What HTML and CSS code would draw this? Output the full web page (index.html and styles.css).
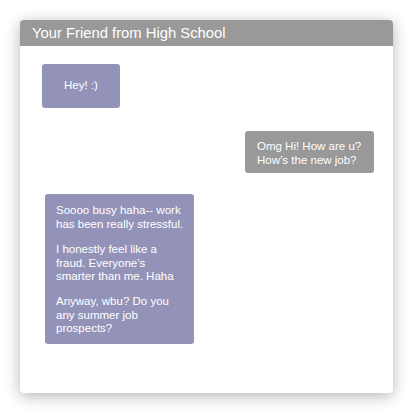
FILE: index.html
```html
<!DOCTYPE html>
<html>
<head>
<meta charset="utf-8">
<link rel="stylesheet" href="styles.css">
</head>
<body>
<div class="card">
  <div class="header">Your Friend from High School</div>
  <div class="thread">
    <div class="bubble them hey">Hey! :)</div>
    <div class="bubble me">Omg Hi! How are u? How’s the new job?</div>
    <div class="bubble them long">
      <p>Soooo busy haha-- work has been really stressful.</p>
      <p>I honestly feel like a fraud. Everyone’s smarter than me. Haha</p>
      <p>Anyway, wbu? Do you any summer job prospects?</p>
    </div>
  </div>
</div>
</body>
</html>
```
FILE: styles.css
```css
html, body {
  margin: 0;
  padding: 0;
  background: #fff;
}
body {
  padding: 20px;
  font-family: "Liberation Sans", Arial, sans-serif;
}
.card {
  width: 373px;
  height: 373px;
  background: #fff;
  border-radius: 4px;
  box-shadow: 0 3px 15px rgba(0, 0, 0, 0.3);
  overflow: hidden;
}
.header {
  height: 26px;
  background: #999999;
  color: #fff;
  font-size: 14.8px;
  line-height: 27px;
  padding-left: 12px;
}
.thread {
  display: flex;
  flex-direction: column;
  padding: 18px 19px 0 22px;
}
.bubble {
  color: #fff;
  font-size: 11.5px;
  line-height: 13.7px;
  border-radius: 3px;
  box-sizing: border-box;
}
.them {
  background: #9393b9;
  align-self: flex-start;
}
.me {
  background: #999999;
  align-self: flex-end;
  width: 129px;
  margin-top: 23px;
  padding: 9px 11px 6px 12px;
}
.hey {
  width: 78px;
  height: 44px;
  display: flex;
  align-items: center;
  justify-content: center;
}
.long {
  width: 149px;
  margin-top: 21px;
  margin-left: 3px;
  padding: 10px 10px 8px 11px;
}
.long p {
  margin: 0 0 11px 0;
}
.long p:last-child {
  margin-bottom: 0;
}
```
